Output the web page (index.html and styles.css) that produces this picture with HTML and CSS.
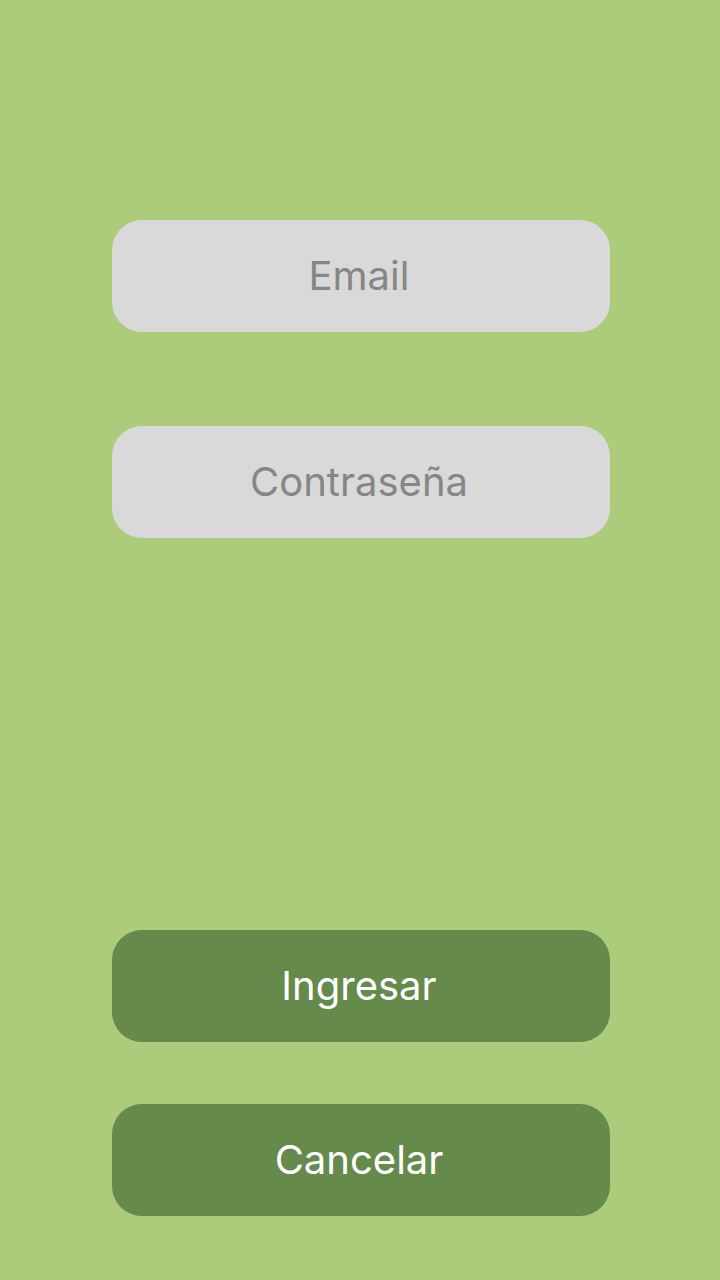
FILE: index.html
```html
<!DOCTYPE html>
<html lang="es">
<head>
<meta charset="utf-8">
<title>Login</title>
<link rel="stylesheet" href="styles.css">
</head>
<body>
<main class="screen">
  <div class="fields">
    <div class="field">Email</div>
    <div class="field">Contraseña</div>
  </div>
  <div class="actions">
    <button class="btn">Ingresar</button>
    <button class="btn">Cancelar</button>
  </div>
</main>
</body>
</html>
```
FILE: styles.css
```css
html, body {
  margin: 0;
  padding: 0;
}
body {
  background: #adcc7b;
  font-family: Inter, "Noto Sans", sans-serif;
}
.screen {
  height: 1280px;
  box-sizing: border-box;
  padding: 220px 110px 64px 112px;
  display: flex;
  flex-direction: column;
  justify-content: space-between;
}
.fields, .actions {
  display: flex;
  flex-direction: column;
}
.fields { gap: 94px; }
.actions { gap: 62px; }
.field, .btn {
  height: 112px;
  border-radius: 30px;
  display: flex;
  align-items: center;
  justify-content: center;
  font-size: 40px;
  font-family: inherit;
  box-sizing: border-box;
  padding: 0 4px 2px 0;
}
.field {
  background: #d9d9d9;
  color: #868686;
}
.btn {
  border: none;
  background: #66894c;
  color: #ffffff;
  width: 100%;
}
```
